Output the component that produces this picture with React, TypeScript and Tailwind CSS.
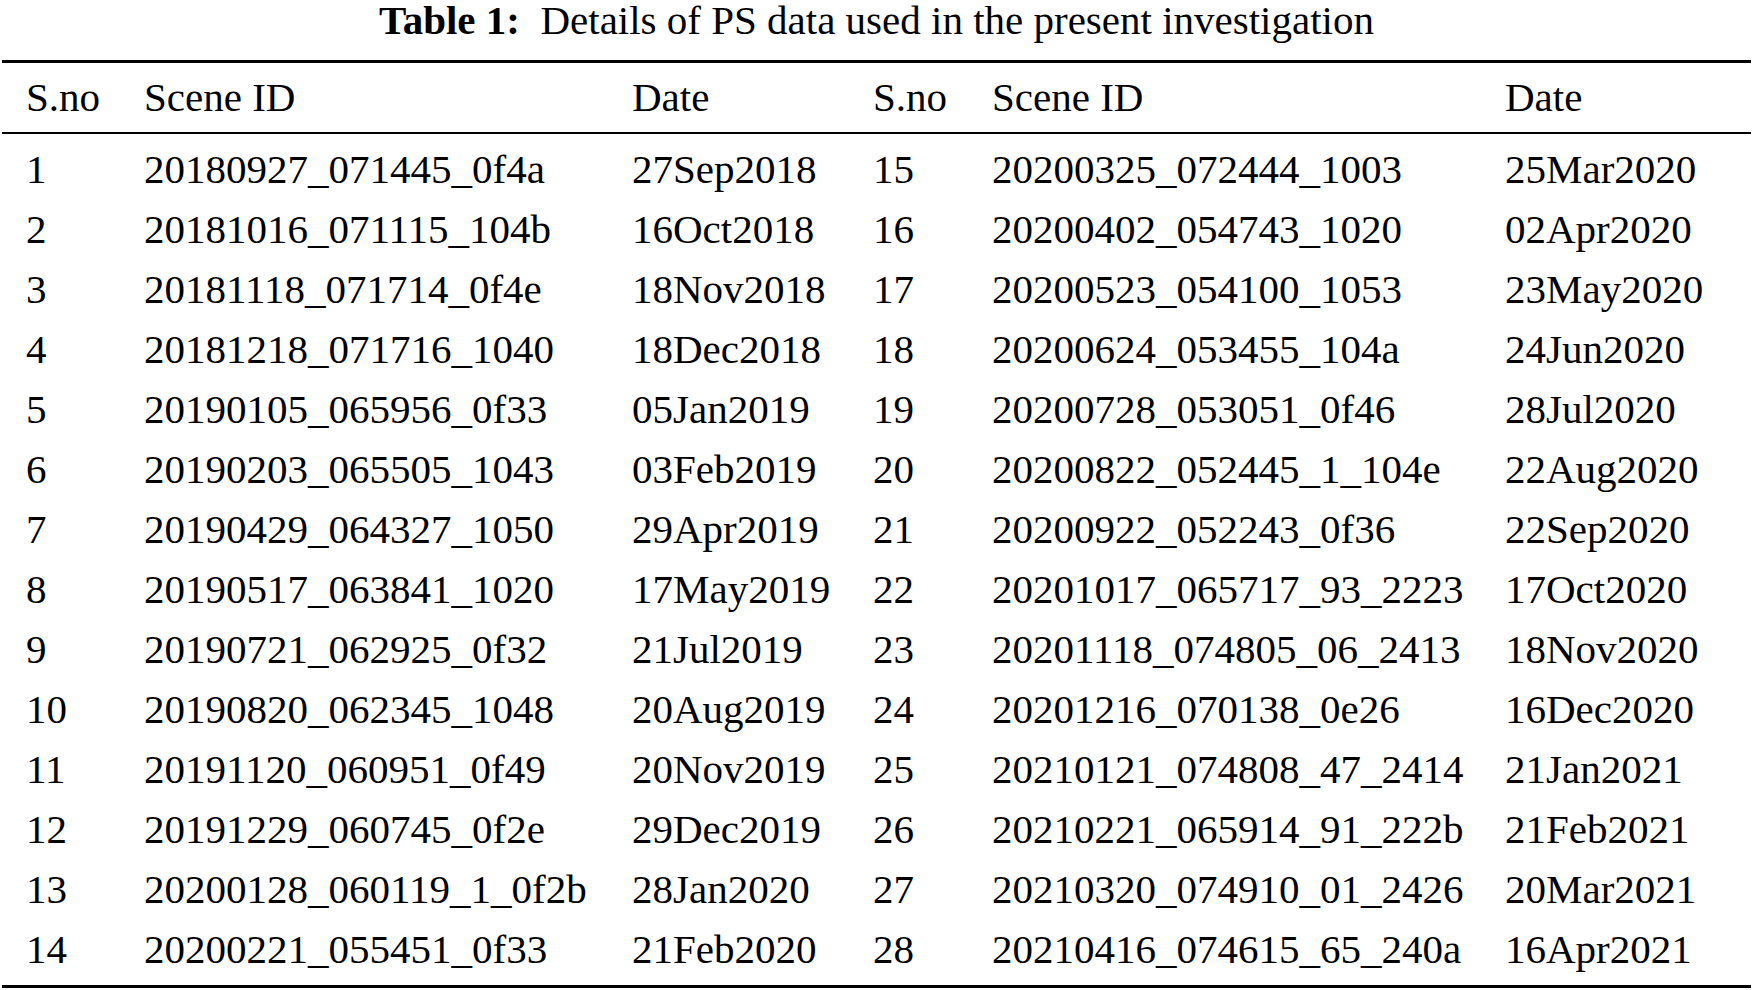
const rows: [string, string, string, string, string, string][] = [
  ['1', '20180927_071445_0f4a', '27Sep2018', '15', '20200325_072444_1003', '25Mar2020'],
  ['2', '20181016_071115_104b', '16Oct2018', '16', '20200402_054743_1020', '02Apr2020'],
  ['3', '20181118_071714_0f4e', '18Nov2018', '17', '20200523_054100_1053', '23May2020'],
  ['4', '20181218_071716_1040', '18Dec2018', '18', '20200624_053455_104a', '24Jun2020'],
  ['5', '20190105_065956_0f33', '05Jan2019', '19', '20200728_053051_0f46', '28Jul2020'],
  ['6', '20190203_065505_1043', '03Feb2019', '20', '20200822_052445_1_104e', '22Aug2020'],
  ['7', '20190429_064327_1050', '29Apr2019', '21', '20200922_052243_0f36', '22Sep2020'],
  ['8', '20190517_063841_1020', '17May2019', '22', '20201017_065717_93_2223', '17Oct2020'],
  ['9', '20190721_062925_0f32', '21Jul2019', '23', '20201118_074805_06_2413', '18Nov2020'],
  ['10', '20190820_062345_1048', '20Aug2019', '24', '20201216_070138_0e26', '16Dec2020'],
  ['11', '20191120_060951_0f49', '20Nov2019', '25', '20210121_074808_47_2414', '21Jan2021'],
  ['12', '20191229_060745_0f2e', '29Dec2019', '26', '20210221_065914_91_222b', '21Feb2021'],
  ['13', '20200128_060119_1_0f2b', '28Jan2020', '27', '20210320_074910_01_2426', '20Mar2021'],
  ['14', '20200221_055451_0f33', '21Feb2020', '28', '20210416_074615_65_240a', '16Apr2021'],
]

const headers = ['S.no', 'Scene ID', 'Date', 'S.no', 'Scene ID', 'Date']

// column starts: 26, 144, 632, 873, 992, 1505
const cols = 'grid grid-cols-[118px_488px_241px_119px_513px_1fr] pl-[24px]'

export default function App() {
  return (
    <div className="h-[990px] w-[1753px] overflow-hidden bg-white font-['Liberation_Serif','Times_New_Roman',serif] text-[41px] text-black">
      <div className="h-[40px] text-center leading-[40px] whitespace-pre">
        <span className="font-bold">Table 1:</span>
        {'  Details of PS data used in the present investigation'}
      </div>

      <div className="mx-[2px] mt-[20px] border-y-[3px] border-black">
        <div className="border-b-[2px] border-black pb-[5px] pt-[4px]">
          <div className={cols}>
            {headers.map((h, i) => (
              <div key={i} className="h-[60px] leading-[60px] whitespace-nowrap">{h}</div>
            ))}
          </div>
        </div>

        <div className="pb-[6px] pt-[5px]">
          {rows.map((r) => (
            <div key={r[0]} className={cols}>
              {r.map((cell, i) => (
                <div key={i} className="h-[60px] leading-[60px] whitespace-nowrap">{cell}</div>
              ))}
            </div>
          ))}
        </div>
      </div>
    </div>
  )
}
